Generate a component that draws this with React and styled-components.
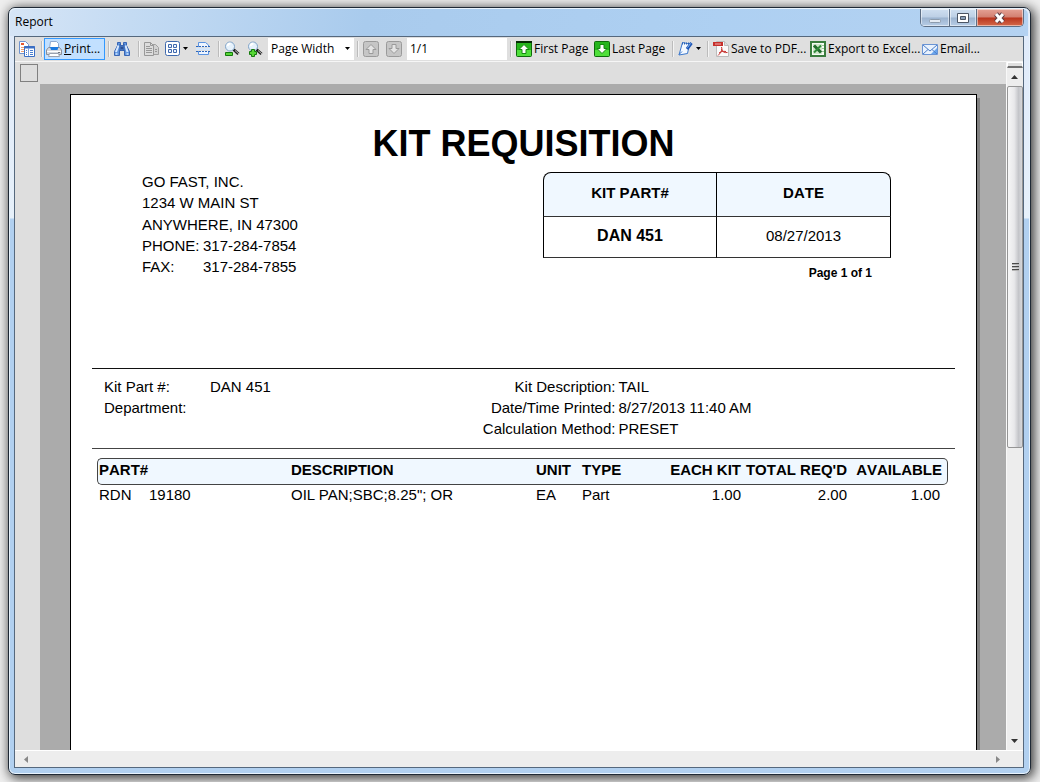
import React, { Component } from 'react'
import styled, { createGlobalStyle } from 'styled-components'

const UI_FONT = '"Open Sans", "Noto Sans", sans-serif'
const DOC_FONT = '"Liberation Sans", Arial, sans-serif'

const Icon = ({ children }) => (
    <svg width="16" height="16" viewBox="0 0 16 16" fill="none" aria-hidden="true">{children}</svg>
)

const Arrow = () => (
    <svg width="6" height="4" viewBox="0 0 6 4" aria-hidden="true"><path d="M0 0h5L2.5 3z" fill="#000" /></svg>
)

const TreeIcon = () => (
    <Icon>
        <path d="M.5.5h6l3 3v9h-9z" fill="#fff" stroke="#6f93cf" />
        <path d="M2 3h3" stroke="#e8582e" strokeWidth="2" />
        <path d="M2 6.5h3M2 8.5h3M2 10.5h3" stroke="#f0a070" />
        <path d="M5.5 5.5h10v10h-10z" fill="#fff" stroke="#3b6fc4" />
        <path d="M5 6.5h11" stroke="#3b6fc4" strokeWidth="2" />
        <path d="M9.5 7v8" stroke="#7ea3dd" />
        <path d="M7 9.5h1M7 11.5h1M7 13.5h1M11 9.5h3M11 11.5h3M11 13.5h3" stroke="#4a7fd0" />
    </Icon>
)

const PrintIcon = () => (
    <Icon>
        <path d="M3.5 7l1-6.5h6L12.5 2.500V7" fill="#fff" stroke="#8fa9cf" />
        <path d="M2.500 6.500h11l2 2.500v4.500h-15V9z" fill="#d5d8dd" stroke="#8a8f99" />
        <path d="M4 6h8.500l-1 3h-6.500z" fill="#1c7be0" />
        <path d="M1 10.500h14" stroke="#fff" />
        <path d="M3.500 12.500h9l1 3h-11z" fill="#fff" stroke="#9aa2b0" />
        <path d="M12 11.500h2" stroke="#6f747c" />
    </Icon>
)

const FindIcon = () => (
    <Icon>
        <path d="M3.500 1.500h3v3h3v-3h3v3l3 6v4h-5v-5h-5v5h-5v-4l3-6z" fill="#5f94de" stroke="#3a66b4" />
        <path d="M4.500 4.500L2 11M11.500 4.500L13.500 11" stroke="#d8e9ff" strokeWidth="2" />
        <path d="M6.500 5.500h3v3h-3z" fill="#2c4f93" />
        <path d="M6 3v7M10 3v7" stroke="#2f5aa6" />
        <path d="M2.500 12v2M13.500 12v2" stroke="#b4d2f8" strokeWidth="2" />
    </Icon>
)

const CopyIcon = () => (
    <Icon>
        <path d="M8.500 3.500h3l3 3v7h-6z" fill="#d2d2d2" stroke="#a0a0a0" />
        <path d="M.5 1.500h6l3 3v10h-9z" fill="#dcdcdc" stroke="#989898" />
        <path d="M2 5.500h4M2 7.500h6M2 9.500h6M2 11.500h6M11 8.500h2M11 10.500h2" stroke="#989898" />
        <path d="M6.500 1.500v3h3" stroke="#989898" />
    </Icon>
)

const GridIcon = () => (
    <Icon>
        <rect x=".5" y=".5" width="14" height="14" rx="2" fill="#fff" stroke="#3f69ad" />
        <path d="M3.500 3.500h3v3h-3zM8.500 3.500h3v3h-3zM3.500 8.500h3v3h-3zM8.500 8.500h3v3h-3z" fill="#eef4ff" stroke="#3f69ad" />
    </Icon>
)

const MarginsIcon = () => (
    <Icon>
        <path d="M2.500 6V1.500h7L12.500 4v2M2.500 10v3.500h10V10" fill="#eef5ff" stroke="#5b93e0" />
        <path d="M0 5.500h2M3 5.500h2M6 5.500h2M9 5.500h2M12 5.500h2M0 10.500h2M3 10.500h2M6 10.500h2M9 10.500h2M12 10.500h2" stroke="#2d67bd" />
        <path d="M0 8h14" stroke="#d4e6fb" strokeWidth="2" />
    </Icon>
)

const ZoomIcon = ({ plus }) => (
    <Icon>
        <path d="M9.500 8.500l5 4.500" stroke="#222" strokeWidth="3" />
        <path d="M11 9.500l4 3.500" stroke="#bbb" />
        <circle cx="6" cy="5.500" r="4.500" fill="#e6f2fc" stroke="#7fa3c8" />
        <path d="M3.500 5a3 3 0 013-2.500" stroke="#fff" strokeWidth="2" />
        {plus
            ? <path d="M4.500 8.500h3v2h2v3h-2v2h-3v-2h-2v-3h2z" fill="#58d636" stroke="#147a0c" />
            : <path d="M1.500 11.500h7v3h-7z" fill="#58d636" stroke="#147a0c" />}
    </Icon>
)

const PageArrowIcon = ({ down, green }) => (
    <Icon>
        <rect x=".5" y=".5" width="15" height="15" rx={green ? 1 : 2} fill={green ? '#25b51c' : '#c6c6c6'} stroke={green ? '#0d6b0a' : '#9a9a9a'} />
        {green && <path d="M1 9h14v6H1z" fill="#4fe03a" />}
        {green && !down && <path d="M0 1h16" stroke="#052b04" strokeWidth="2" />}
        <path
            d={down ? 'M6 3.500h4v4h3L8 12.500 3 7.500h3z' : 'M6 12.500h4v-4h3L8 3.500 3 8.500h3z'}
            fill={green ? '#fff' : '#e4e4e4'}
            stroke={green ? '#158a10' : '#9a9a9a'}
        />
    </Icon>
)

const NoteIcon = () => (
    <Icon>
        <path d="M4.500 1.500l7 1.500-2 9.500-8.500 1.500z" fill="#f4f9ff" stroke="#3a77cc" />
        <path d="M4 2.500h7" stroke="#2a62b5" strokeDasharray="1 1" strokeWidth="2" />
        <path d="M9 8l4.500-6" stroke="#1d56b8" strokeWidth="3" />
        <path d="M9.500 6.500l3-4" stroke="#8bbcf4" />
        <path d="M1 13.500l3-3" stroke="#3a77cc" />
    </Icon>
)

const PdfIcon = () => (
    <Icon>
        <path d="M3.500.500h8l4 4v11h-12z" fill="#fafafa" stroke="#bcbcbc" />
        <path d="M11.500.500v4h4" fill="#ddd" stroke="#bcbcbc" />
        <path d="M0 1h10v4H0z" fill="#c62f2b" />
        <path d="M2 3h6" stroke="#f0b0ae" />
        <path d="M8.500 6c1 3 0 5-3.500 8.500M8.500 8c1 3 3 4 6 3.500M6 12c2-1.500 4-2 7-1.500" stroke="#c62f2b" />
    </Icon>
)

const ExcelIcon = () => (
    <Icon>
        <path d="M1 1h14v14H1z" fill="#f7fbf5" stroke="#3b7d3f" strokeWidth="2" />
        <path d="M11 4.500h3M11 7.500h3M11 10.500h3" stroke="#9cc79a" />
        <path d="M3 3h9v10H3z" fill="#cfe6cb" />
        <path d="M4 4.500l7 7" stroke="#1f6b2a" strokeWidth="3" />
        <path d="M11 4.500l-7 7" stroke="#2f8a3a" strokeWidth="2" />
    </Icon>
)

const MailIcon = () => (
    <Icon>
        <path d="M.5 3.500h15v10H.5z" fill="#e9f2fd" stroke="#6a94d4" />
        <path d="M9 13l6-6v6z" fill="#6aa6ee" />
        <path d="M1 4l7 6 7-6M1 13l5-4.500M15 13l-5-4.500" stroke="#4e7fc8" />
    </Icon>
)

const items = [
    { line: 'RDN', part: '19180', description: 'OIL PAN;SBC;8.25"; OR', unit: 'EA', type: 'Part', each: '1.00', total: '2.00', available: '1.00' },
]

export default class App extends Component {
    state = {
        zoom: 'Page Width',
        page: '1/1',
    }

    changeZoom = (e) => {
        this.setState({ zoom: e.target.value })
    }

    changePage = (e) => {
        this.setState({ page: e.target.value })
    }

    renderToolbar() {
        return (
            <Toolbar>
                <Tool $w={22} aria-label="Document map"><TreeIcon /></Tool>
                <Separator />
                <Tool $w={61} $active><PrintIcon /><span><u>P</u>rint...</span></Tool>
                <Separator />
                <Tool $w={24} aria-label="Find"><FindIcon /></Tool>
                <Separator />
                <Tool $w={21} aria-label="Copy" disabled><CopyIcon /></Tool>
                <Tool $w={31} aria-label="Multiple pages"><GridIcon /><Arrow /></Tool>
                <Tool $w={22} aria-label="Continuous"><MarginsIcon /></Tool>
                <Separator />
                <Tool $w={23} aria-label="Zoom out"><ZoomIcon /></Tool>
                <Tool $w={24} aria-label="Zoom in"><ZoomIcon plus /></Tool>
                <ZoomBox>
                    <ZoomSelect aria-label="Zoom" value={this.state.zoom} onChange={this.changeZoom}>
                        <option>Page Width</option>
                        <option>Whole Page</option>
                        <option>100%</option>
                    </ZoomSelect>
                    <Arrow />
                </ZoomBox>
                <Separator />
                <Tool $w={23} aria-label="Previous page" disabled><PageArrowIcon /></Tool>
                <Tool $w={24} aria-label="Next page" disabled><PageArrowIcon down /></Tool>
                <PageInput aria-label="Page" value={this.state.page} onChange={this.changePage} />
                <Separator />
                <Tool $w={78}><PageArrowIcon green /><span>First Page</span></Tool>
                <Tool $w={78}><PageArrowIcon green down /><span>Last Page</span></Tool>
                <Separator />
                <Tool $w={29} aria-label="Annotations"><NoteIcon /><Arrow /></Tool>
                <Separator />
                <Tool $w={97}><PdfIcon /><span>Save to PDF...</span></Tool>
                <Tool $w={112}><ExcelIcon /><span>Export to Excel...</span></Tool>
                <Tool $w={64}><MailIcon /><span>Email...</span></Tool>
            </Toolbar>
        )
    }

    renderPage() {
        return (
            <Page>
                <Title>KIT REQUISITION</Title>
                <PageHeader>
                    <Address>
                        <div>
                            <div>GO FAST, INC.</div>
                            <div>1234 W MAIN ST</div>
                        </div>
                        <div>
                            <div>ANYWHERE, IN 47300</div>
                            <Phone><span>PHONE:</span><span>317-284-7854</span></Phone>
                            <Phone><span>FAX:</span><span>317-284-7855</span></Phone>
                        </div>
                    </Address>
                    <Summary>
                        <KitTable>
                            <thead>
                                <tr><th>KIT PART#</th><th>DATE</th></tr>
                            </thead>
                            <tbody>
                                <tr><td><b>DAN 451</b></td><td>08/27/2013</td></tr>
                            </tbody>
                        </KitTable>
                        <PageCount>Page 1 of 1</PageCount>
                    </Summary>
                </PageHeader>
                <Details>
                    <KitInfo>
                        <dt>Kit Part #:</dt><dd>DAN 451</dd>
                        <dt>Department:</dt><dd></dd>
                    </KitInfo>
                    <PrintInfo>
                        <dt>Kit Description:</dt><dd>TAIL</dd>
                        <dt>Date/Time Printed:</dt><dd>8/27/2013 11:40 AM</dd>
                        <dt>Calculation Method:</dt><dd>PRESET</dd>
                    </PrintInfo>
                </Details>
                <ItemsWrap>
                    <ItemsTable>
                        <colgroup>
                            <Col $w={192} /><Col /><Col $w={46} /><Col $w={80} /><Col $w={83} /><Col $w={106} /><Col $w={99} />
                        </colgroup>
                        <thead>
                            <tr>
                                <Th>PART#</Th>
                                <Th>DESCRIPTION</Th>
                                <Th>UNIT</Th>
                                <Th>TYPE</Th>
                                <Th $right>EACH KIT</Th>
                                <Th $right>TOTAL REQ'D</Th>
                                <Th $right>AVAILABLE</Th>
                            </tr>
                        </thead>
                        <tbody>
                            {items.map((item) => (
                                <tr key={item.part}>
                                    <Td><Line>{item.line}</Line>{item.part}</Td>
                                    <Td>{item.description}</Td>
                                    <Td>{item.unit}</Td>
                                    <Td>{item.type}</Td>
                                    <Td $right>{item.each}</Td>
                                    <Td $right>{item.total}</Td>
                                    <Td $right>{item.available}</Td>
                                </tr>
                            ))}
                        </tbody>
                    </ItemsTable>
                </ItemsWrap>
            </Page>
        )
    }

    render() {
        return (
            <Desktop>
                <GlobalStyle />
                <Window>
                    <TitleBar>
                        <Caption>Report</Caption>
                        <Controls>
                            <Control $w={28} aria-label="Minimize">
                                <svg width="13" height="16"><rect x=".5" y="9.500" width="11" height="3" rx="1" fill="#e4ebf3" stroke="#8c9bac" /></svg>
                            </Control>
                            <Control $w={27} aria-label="Maximize">
                                <svg width="13" height="16"><path d="M.5 3.500h11v9H.5z" fill="#fff" stroke="#4b5564" /><path d="M3.500 6.500h5v3h-5z" fill="#8a9fb8" stroke="#4b5564" /></svg>
                            </Control>
                            <Control $w={47} $close aria-label="Close">
                                <svg width="14" height="16"><path d="M3 4l7 8M10 4l-7 8" stroke="#5c3c42" strokeWidth="5" /><path d="M3 4l7 8M10 4l-7 8" stroke="#fff" strokeWidth="3" /></svg>
                            </Control>
                        </Controls>
                    </TitleBar>
                    <Client>
                        {this.renderToolbar()}
                        <Workspace>
                            <Main>
                                <Ruler><Corner /></Ruler>
                                <Body>
                                    <Canvas>{this.renderPage()}</Canvas>
                                </Body>
                            </Main>
                            <VerticalScroll>
                                <Splitter />
                                <ScrollButton aria-label="Scroll up">
                                    <svg width="8" height="4"><path d="M0 4l3.500-4L7 4z" fill="#333" /></svg>
                                </ScrollButton>
                                <Track>
                                    <Thumb>
                                        <Grip /><Grip /><Grip />
                                    </Thumb>
                                </Track>
                                <ScrollButton aria-label="Scroll down">
                                    <svg width="8" height="4"><path d="M0 0l3.500 4L7 0z" fill="#333" /></svg>
                                </ScrollButton>
                            </VerticalScroll>
                        </Workspace>
                        <HorizontalScroll>
                            <ScrollButton aria-label="Scroll left">
                                <svg width="4" height="8"><path d="M4 0L0 3.500 4 7z" fill="#888" /></svg>
                            </ScrollButton>
                            <ScrollButton aria-label="Scroll right">
                                <svg width="4" height="8"><path d="M0 0l4 3.500L0 7z" fill="#888" /></svg>
                            </ScrollButton>
                        </HorizontalScroll>
                    </Client>
                </Window>
            </Desktop>
        )
    }
}

const GlobalStyle = createGlobalStyle`
  * { box-sizing: border-box; }
  body { margin: 0; background: #efefef; }
  button, input, select { font: inherit; color: inherit; }
  svg { flex: none; }
`;

const Desktop = styled.div`
  display: flex;
  height: 100vh;
  padding: 7px 9px 7px 8px;
  overflow: hidden;
  font: 12px/16px ${UI_FONT};
  color: #000;
`;

const Window = styled.div`
  flex: 1;
  min-width: 0;
  display: flex;
  flex-direction: column;
  padding: 0 6px 6px 5px;
  border: 1px solid #1f2935;
  border-radius: 7px;
  background: linear-gradient(#dfeafa 0, #e6f0fa 210px, #b1d0f0 211px);
  box-shadow: inset 0 0 0 1px #e8f3fd, 2px 2px 12px 1px rgba(0, 0, 0, 0.8);
`;

const TitleBar = styled.div`
  display: flex;
  align-items: flex-start;
  justify-content: space-between;
  height: 28px;
  margin: 0 -4px;
  padding: 0 4px 0 5px;
  border-top: 1px solid #e8f3fd;
  border-radius: 6px 6px 0 0;
  background: linear-gradient(100deg, #d6e5f6 0, #c4dbf3 12%, #a9cbed 35%, #aed0f2 70%, #b4d2f1 100%);
`;

const Caption = styled.div`
  padding-top: 5px;
`;

const Controls = styled.div`
  display: flex;
  height: 18px;
  border: 1px solid #5d6f85;
  border-top: 0;
  border-radius: 0 0 5px 5px;
  overflow: hidden;
`;

const Control = styled.button`
  width: ${(p) => p.$w}px;
  display: flex;
  align-items: center;
  justify-content: center;
  padding: 0;
  border: 0;
  border-left: ${(p) => (p.$w === 28 ? '0' : '1px solid #5d6f85')};
  box-shadow: inset 0 0 0 1px rgba(255, 255, 255, 0.5);
  background: ${(p) => p.$close
        ? 'linear-gradient(#e5a295 0, #d27f70 48%, #b9341d 52%, #d4694a 100%)'
        : 'linear-gradient(#cfdff0 0, #bccfe5 48%, #9bb3cf 52%, #b7cde6 100%)'};
`;

const Client = styled.div`
  flex: 1;
  min-height: 0;
  display: flex;
  flex-direction: column;
  border: 1px solid #55687d;
  background: #dedede;
`;

const Toolbar = styled.div`
  display: flex;
  align-items: stretch;
  height: 25px;
  padding: 1px 0 1px 1px;
  border-bottom: 1px solid #f6f6f6;
  background: #dfdfdf;
`;

const Tool = styled.button`
  flex: none;
  width: ${(p) => p.$w}px;
  display: flex;
  align-items: center;
  gap: 2px;
  padding: 0 0 0 ${(p) => (p.$active ? 1 : 3)}px;
  border: ${(p) => (p.$active ? '1px solid #3399ff' : '0')};
  background: ${(p) => (p.$active ? '#c2e0ff' : 'transparent')};
  color: #000;
  white-space: nowrap;
`;

const Separator = styled.div`
  flex: none;
  width: 2px;
  margin: 3px 1px 3px 3px;
  border-left: 1px solid #bcbcbc;
  border-right: 1px solid #f4f4f4;
`;

const ZoomBox = styled.label`
  flex: none;
  width: 86px;
  display: flex;
  align-items: center;
  padding-right: 3px;
  background: #fff;
`;

const ZoomSelect = styled.select`
  flex: 1;
  min-width: 0;
  appearance: none;
  padding: 0 0 0 3px;
  border: 0;
  background: transparent;
`;

const PageInput = styled.input`
  flex: none;
  width: 100px;
  padding: 0 3px;
  border: 0;
  background: #fff;
`;

const Workspace = styled.div`
  flex: 1;
  min-height: 0;
  display: flex;
`;

const Main = styled.div`
  flex: 1;
  min-width: 0;
  display: flex;
  flex-direction: column;
`;

const Ruler = styled.div`
  flex: none;
  height: 22px;
  padding: 2px 5px;
`;

const Corner = styled.div`
  width: 18px;
  height: 18px;
  border: 1px solid #808080;
`;

const Body = styled.div`
  flex: 1;
  min-height: 0;
  display: flex;
  padding-left: 25px;
`;

const Canvas = styled.div`
  flex: 1;
  min-width: 0;
  display: flex;
  padding: 10px 29px 0 30px;
  overflow: hidden;
  background: #ababab;
`;

const Page = styled.div`
  flex: 1;
  min-width: 0;
  height: 1170px;
  padding: 28px 21px;
  border: 1px solid #000;
  background: #fff;
  box-shadow: 3px 4px 0 #808080;
  font: 15px/21px ${DOC_FONT};
`;

const Title = styled.h1`
  margin: 0 0 6px;
  font-size: 36px;
  line-height: 42px;
  text-align: center;
`;

const PageHeader = styled.div`
  display: flex;
  justify-content: space-between;
  min-height: 197px;
  padding: 0 64px 0 50px;
`;

const Address = styled.div`
  display: flex;
  flex-direction: column;
  gap: 1px;
`;

const Phone = styled.div`
  display: grid;
  grid-template-columns: 61px auto;
`;

const Summary = styled.div`
  width: 348px;
  padding-top: 1px;
`;

const KitTable = styled.table`
  width: 100%;
  table-layout: fixed;
  border-collapse: separate;
  border-spacing: 0;

  th, td {
    padding: 0 0 4px;
    text-align: center;
    border-bottom: 1px solid #333;
    border-right: 1px solid #000;
  }
  th {
    height: 45px;
    padding-bottom: 5px;
    border-top: 1px solid #000;
    background: #f0f8ff;
    font-kerning: none;
  }
  td { height: 41px; }
  b { font-size: 16px; }
  th:first-child, td:first-child { border-left: 1px solid #000; }
  th:first-child { border-top-left-radius: 8px; }
  th:last-child { border-top-right-radius: 8px; }
`;

const PageCount = styled.div`
  padding: 5px 19px 0 0;
  font-size: 12px;
  font-weight: bold;
  text-align: right;
`;

const Details = styled.div`
  display: flex;
  min-height: 81px;
  padding: 7px 0 0 12px;
  border-top: 1px solid #111;
  border-bottom: 1px solid #444;
`;

const InfoList = styled.dl`
  display: grid;
  align-content: start;
  margin: 0;

  dd { margin: 0; }
`;

const KitInfo = styled(InfoList)`
  flex: 0 0 44%;
  grid-template-columns: 106px 1fr;
`;

const PrintInfo = styled(InfoList)`
  flex: 1;
  grid-template-columns: 137px 1fr;
  column-gap: 3px;

  dt { text-align: right; }
`;

const ItemsWrap = styled.div`
  padding: 9px 7px 0 5px;
`;

const ItemsTable = styled.table`
  width: 100%;
  table-layout: fixed;
  border-collapse: separate;
  border-spacing: 0;
`;

const Col = styled.col`
  width: ${(p) => (p.$w ? p.$w + 'px' : 'auto')};
`;

const Th = styled.th`
  height: 27px;
  padding: 0 2px 4px;
  border: solid #444;
  border-width: 1px 0;
  background: #f0f8ff;
  text-align: ${(p) => (p.$right ? 'right' : 'left')};
  white-space: nowrap;
  font-kerning: none;

  &:first-child {
    padding-left: 1px;
    border-left-width: 1px;
    border-radius: 5px 0 0 5px;
  }
  &:last-child {
    padding-right: 5px;
    border-right-width: 1px;
    border-radius: 0 5px 5px 0;
  }
`;

const Td = styled.td`
  padding: 0 2px;
  line-height: 19px;
  text-align: ${(p) => (p.$right ? 'right' : 'left')};
  white-space: nowrap;

  &:last-child { padding-right: 8px; }
`;

const Line = styled.span`
  display: inline-block;
  width: 50px;
`;

const VerticalScroll = styled.div`
  flex: none;
  width: 17px;
  display: flex;
  flex-direction: column;
  border-left: 1px solid #f8f8f8;
  background: #ededed;
`;

const Splitter = styled.div`
  height: 6px;
  border: 1px solid #fff;
  border-bottom: 2px solid #707070;
  background: #e0e0e0;
`;

const ScrollButton = styled.button`
  flex: none;
  width: 16px;
  height: 18px;
  display: flex;
  align-items: center;
  justify-content: center;
  padding: 0;
  border: 0;
  background: transparent;
`;

const Track = styled.div`
  flex: 1;
`;

const Thumb = styled.div`
  height: 56%;
  display: flex;
  flex-direction: column;
  align-items: center;
  justify-content: center;
  gap: 1px;
  border: 1px solid #959595;
  border-radius: 2px;
  background: linear-gradient(90deg, #f6f6f6, #e8e8ea 45%, #c4c5c9 75%, #d6d7da);
`;

const Grip = styled.div`
  width: 7px;
  height: 2px;
  border-top: 1px solid #4a4a4a;
  background: #b5b5b5;
`;

const HorizontalScroll = styled.div`
  flex: none;
  display: flex;
  justify-content: space-between;
  height: 17px;
  padding: 0 17px 0 3px;
  border-top: 1px solid #fff;
  background: #ededed;
`;
